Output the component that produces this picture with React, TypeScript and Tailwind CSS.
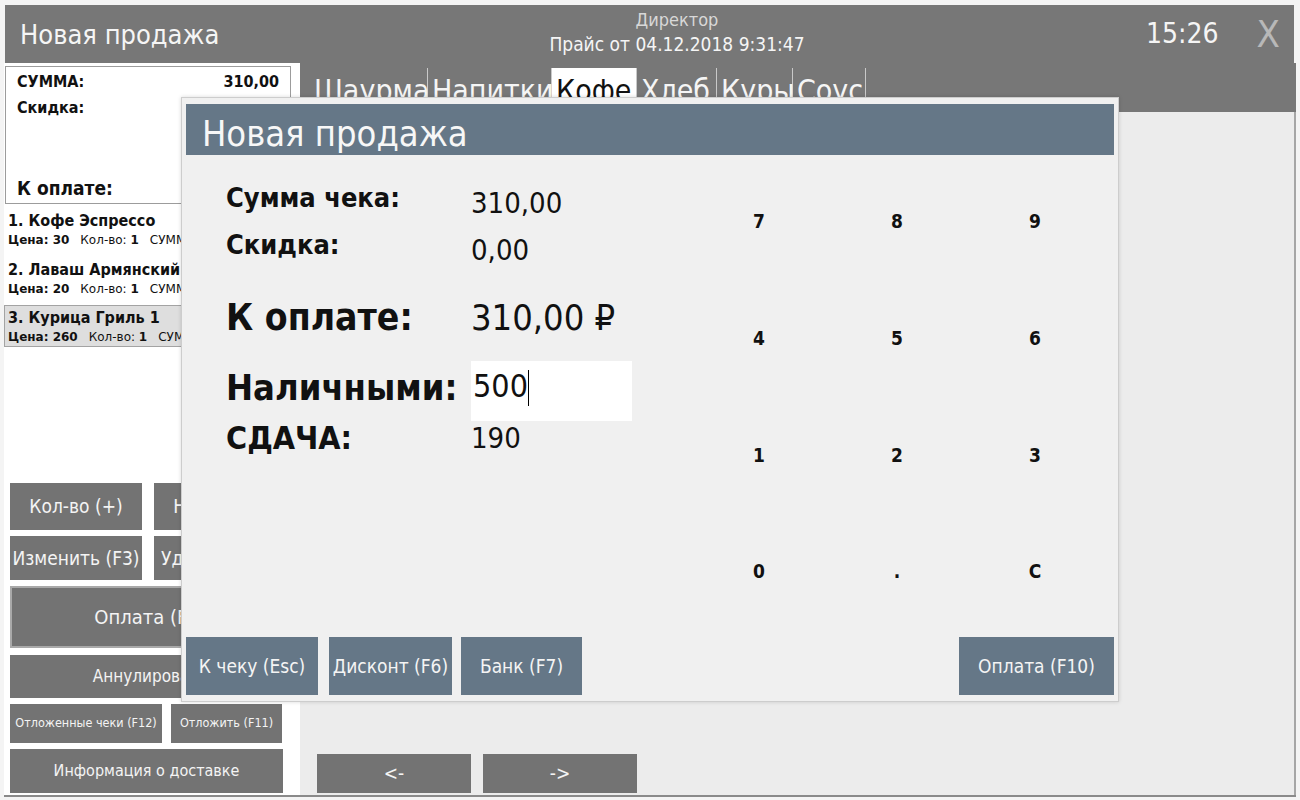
const font = "font-['DejaVu_Sans_Condensed','Liberation_Sans_Narrow','DejaVu_Sans',sans-serif]"
const wideFont = "font-['DejaVu_Sans','Liberation_Sans',sans-serif]"

const tabs = [
  { name: 'Шаурма', w: 'w-[118px]' },
  { name: 'Напитки', w: 'w-[124px]' },
  { name: 'Кофе', w: 'w-[85px]', active: true },
  { name: 'Хлеб', w: 'w-[80px]' },
  { name: 'Куры', w: 'w-[76px]' },
  { name: 'Соус', w: 'w-[73px]' },
]

const items = [
  { title: '1. Кофе Эспрессо', price: 30, qty: 1, sum: '30,00' },
  { title: '2. Лаваш Армянский', price: 20, qty: 1, sum: '20,00' },
  { title: '3. Курица Гриль 1', price: 260, qty: 1, sum: '260,00', selected: true },
]

const keys = ['7', '8', '9', '4', '5', '6', '1', '2', '3', '0', '.', 'C']

const GrayButton = ({ children, className }: { children: React.ReactNode; className: string }) => (
  <button className={`bg-[#737373] text-[#f4f4f4] flex items-center justify-center whitespace-nowrap overflow-hidden ${className}`}>
    {children}
  </button>
)

const ItemRow = ({ item }: { item: (typeof items)[number] }) => (
  <div
    className={
      item.selected
        ? 'mt-[8px] border border-[#a3a3a3] bg-[#dedede] px-[3px] py-[1px] w-[300px]'
        : 'px-[4px] [&+&]:mt-[11px]'
    }
  >
    <div className="text-[16px] leading-[22px] font-bold text-[#111] whitespace-nowrap">{item.title}</div>
    <div className={`text-[12px] leading-[16px] text-[#111] whitespace-nowrap ${wideFont}`}>
      <b>Цена: {item.price}</b>
      <span className="ml-[11px]">Кол-во: </span>
      <b>{item.qty}</b>
      <span className="ml-[11px]">СУММА: </span>
      <b>{item.sum}</b>
    </div>
  </div>
)

const PaymentModal = () => (
  <div className="absolute left-[181px] top-[97px] w-[938px] h-[605px] bg-[#f0f0f0] border border-[#cdcdcd] shadow-[0_0_4px_rgba(0,0,0,0.15)] flex flex-col px-[4px] pt-[6px] pb-[6px]">
    <div className="h-[51px] bg-[#657787] flex items-center pl-[16px] pt-[9px]">
      <span className="text-[36px] text-[#f7f7f7] leading-none">Новая продажа</span>
    </div>

    <div className="flex flex-1 min-h-0">
      <div className="w-[504px] pl-[40px] text-[#111]">
        <div className="flex mt-[23px]">
          <div className="w-[245px] text-[27px] leading-[40px] font-bold">Сумма чека:</div>
          <div className="text-[29px] leading-[50px]">310,00</div>
        </div>
        <div className="flex">
          <div className="w-[245px] text-[27px] leading-[34px] font-bold">Скидка:</div>
          <div className="text-[29px] leading-[44px]">0,00</div>
        </div>
        <div className="flex mt-[24px]">
          <div className="w-[245px] text-[37px] leading-[44px] font-bold">К оплате:</div>
          <div className="text-[36px] leading-[44px]">310,00 ₽</div>
        </div>
        <div className="flex mt-[21px] h-[60px]">
          <div className="w-[245px] text-[36px] leading-[54px] font-bold whitespace-nowrap">Наличными:</div>
          <div className="w-[161px] h-[60px] bg-white flex items-start pl-[2px]">
            <span className="text-[32px] leading-[50px]">500</span>
            <span className="w-[1px] h-[36px] bg-black mt-[9px]" />
          </div>
        </div>
        <div className="flex">
          <div className="w-[245px] text-[32px] leading-[34px] font-bold">СДАЧА:</div>
          <div className="text-[29px] leading-[34px]">190</div>
        </div>
      </div>

      <div className="w-[414px] h-[467px] mt-[8px] grid grid-cols-3 grid-rows-4">
        {keys.map((k) => (
          <button key={k} className="flex items-center justify-center text-[19px] font-bold text-[#111]">
            {k}
          </button>
        ))}
      </div>
    </div>

    <div className="h-[58px] flex text-[19px] text-[#f4f4f4]">
      <button className="w-[132px] bg-[#657787]">К чеку (Esc)</button>
      <button className="w-[123px] ml-[11px] bg-[#657787]">Дисконт (F6)</button>
      <button className="w-[121px] ml-[9px] bg-[#657787]">Банк (F7)</button>
      <button className="w-[155px] ml-auto bg-[#657787]">Оплата (F10)</button>
    </div>
  </div>
)

export default function App() {
  return (
    <div className={`w-[1300px] h-[800px] bg-[#f4f4f4] pt-[5px] pl-[4px] pr-[4px] flex flex-col relative overflow-hidden ${font}`}>
      <header className="h-[58px] bg-[#777777] flex items-center ml-[1px] mr-[2px] text-[#f5f5f5]">
        <div className="w-[450px] pl-[15px] text-[27px] leading-none">Новая продажа</div>
        <div className="w-[444px] text-center text-[18px] leading-[25px] -mt-[4px]">
          <div className="text-[#d8d8d8]">Директор</div>
          <div className="text-[19px]">Прайс от 04.12.2018 9:31:47</div>
        </div>
        <div className="flex-1 flex items-center justify-end pr-[14px]">
          <span className="text-[28px] leading-none">15:26</span>
          <span className="ml-[38px] text-[38px] leading-none text-[#b8b8b8]">X</span>
        </div>
      </header>

      <div className="flex h-[734px] border-b-2 border-[#8a8a8a]">
        <aside className="w-[296px] bg-white flex flex-col">
          <div className="ml-[1px] mt-[3px] w-[286px] h-[138px] border border-[#9c9c9c] flex flex-col px-[11px] pt-[4px] pb-[3px] text-[#111]">
            <div className="flex justify-between text-[16px] leading-[22px] font-bold">
              <span>СУММА:</span>
              <span>310,00</span>
            </div>
            <div className="mt-[4px] text-[16px] leading-[22px] font-bold">Скидка:</div>
            <div className="mt-auto text-[19px] leading-[24px] font-bold">К оплате:</div>
          </div>

          <div className="mt-[6px] w-[177px] overflow-hidden flex flex-col">
            {items.map((it) => (
              <ItemRow key={it.title} item={it} />
            ))}
          </div>

          <div className="mt-[136px] pl-[6px] flex flex-col text-[19px]">
            <div className="flex h-[47px] gap-[12px]">
              <GrayButton className="w-[132px]">Кол-во (+)</GrayButton>
              <GrayButton className="w-[136px]">Новый (F2)</GrayButton>
            </div>
            <div className="flex h-[44px] gap-[12px] mt-[6px]">
              <GrayButton className="w-[132px]">Изменить (F3)</GrayButton>
              <GrayButton className="w-[136px]">Удалить (Del)</GrayButton>
            </div>
            <GrayButton className="mt-[6px] h-[62px] w-[280px] border-2 border-[#a9a9a9] text-[20px]">Оплата (F9)</GrayButton>
            <GrayButton className="mt-[7px] h-[43px] w-[280px] text-[17px]">Аннулировать</GrayButton>
            <div className="flex h-[39px] gap-[9px] mt-[6px] text-[12.5px]">
              <GrayButton className="w-[152px]">Отложенные чеки (F12)</GrayButton>
              <GrayButton className="w-[111px]">Отложить (F11)</GrayButton>
            </div>
            <GrayButton className="mt-[6px] h-[44px] w-[273px] text-[16px]">Информация о доставке</GrayButton>
          </div>
        </aside>

        <main className="flex-1 flex flex-col bg-[#ececec] border-r-2 border-[#a6a6a6]">
          <div className="h-[49px] bg-[#777777] flex items-start pl-[10px] -mr-[2px]">
            {tabs.map((t) => (
              <div
                key={t.name}
                className={`${t.w} mt-[5px] h-[44px] border-r border-[#c9c9c9] flex items-start`}
              >
                <span
                  className={`h-[44px] px-[4px] text-[30px] leading-[46px] ${
                    t.active ? 'bg-white text-[#111] w-full' : 'text-[#f5f5f5]'
                  }`}
                >
                  {t.name}
                </span>
              </div>
            ))}
          </div>
          <div className="flex-1 flex items-end pl-[17px] pb-[2px] gap-[12px] text-[19px] text-[#f4f4f4]">
            <button className="w-[154px] h-[39px] bg-[#737373]">&lt;-</button>
            <button className="w-[154px] h-[39px] bg-[#737373]">-&gt;</button>
          </div>
        </main>
      </div>

      <PaymentModal />
    </div>
  )
}
